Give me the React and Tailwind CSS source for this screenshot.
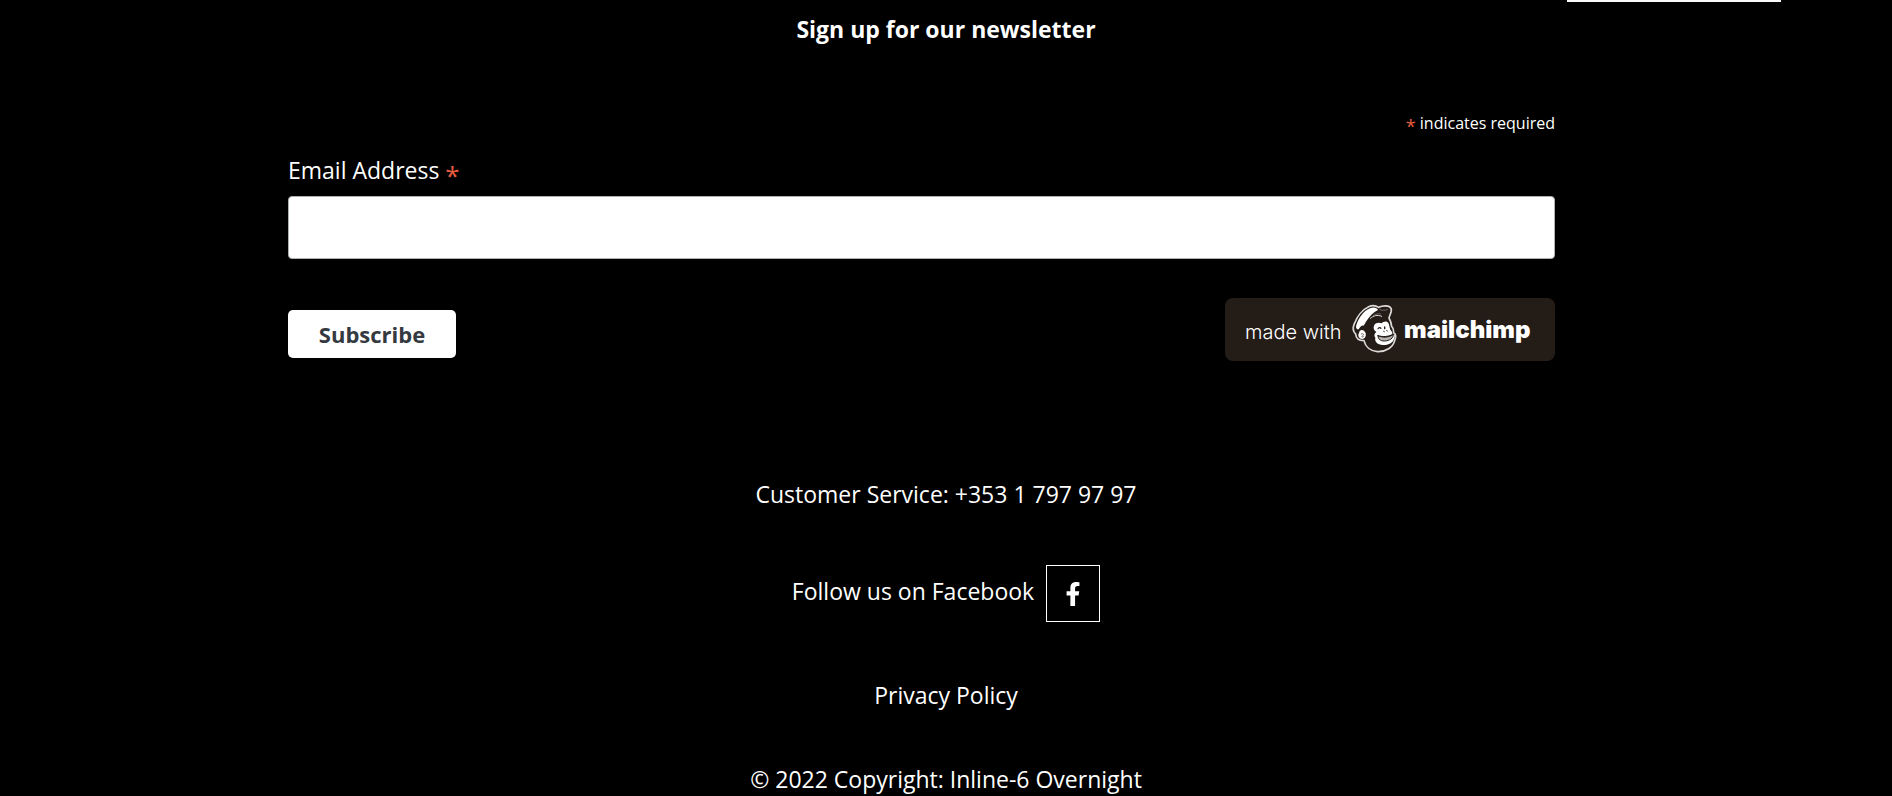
import { FaFacebookF } from "react-icons/fa";

function Freddie() {
  return (
    <svg viewBox="0 0 156 162" className="h-[54px] w-[52px] shrink-0" aria-hidden="true" fill="none" strokeLinecap="round" strokeLinejoin="round">
      {/* head outline */}
      <path
        d="M42 113C30 113 18 108 17 93C9 86 8 74 13 62C20 43 36 20 56 11C67 6 77 7 86 13C98 7 118 6 123 16C128 26 118 36 117 45C121 52 124 62 125 70C132 76 131 84 131 89C139 92 138 104 134 113C129 133 108 147 82 146C61 144 46 131 42 113Z"
        stroke="#dcdad8"
        strokeWidth="5"
      />
      {/* cap */}
      <path d="M60 16C70 11 82 14 84 21C66 29 51 50 41 68C36 66 31 70 26 79C20 80 16 76 19 66C25 47 40 24 60 16Z" fill="#fff" />
      <path d="M87 18C93 23 102 23 112 20" stroke="#8d8783" strokeWidth="2" />
      <path d="M61 46C70 38 82 34 95 40" stroke="#dcdad8" strokeWidth="3" />
      <path d="M70 38C78 32 86 31 92 33" stroke="#8d8783" strokeWidth="2" />
      {/* ear */}
      <path d="M29 84C35 78 45 82 47 91C49 101 44 108 37 108C27 108 22 98 27 90Z" fill="#fff" />
      <path d="M34 93C40 89 43 96 38 98C42 102 38 104 35 101" stroke="#5c544f" strokeWidth="2.5" />
      {/* face */}
      <path
        d="M72 68C74 60 86 57 95 61C100 54 112 53 115 60C119 67 118 74 121 80C125 84 127 88 127 93C134 91 136 97 133 106C129 121 113 128 98 126C83 125 73 116 76 104C71 99 73 91 79 87C72 83 69 75 72 68Z"
        fill="#fff"
      />
      <path d="M84 77C86 73 91 73 93 76" stroke="#241c17" strokeWidth="3.5" />
      <path d="M104 72V77" stroke="#241c17" strokeWidth="4" />
      <path d="M101 85L103 86M110 83L112 84" stroke="#241c17" strokeWidth="3" />
      <path d="M84 98C98 103 118 101 130 93C131 105 119 114 103 114C91 114 84 109 84 98Z" fill="#b5b1ae" stroke="#241c17" strokeWidth="3" />
      <path d="M86 99C100 104 117 102 129 95" stroke="#241c17" strokeWidth="3.5" />
    </svg>
  );
}

function SignupForm() {
  return (
    <form className="mt-16 w-full max-w-[1316px] pr-[49px]" onSubmit={(e) => e.preventDefault()}>
      <p className="text-right text-base leading-6">
        <span className="align-sub text-lg leading-none text-[#e85c41]">*</span> indicates required
      </p>
      <label htmlFor="email" className="mt-[17px] block leading-9">
        Email Address <span className="align-sub text-[26px] leading-none text-[#e85c41]">*</span>
      </label>
      <input
        id="email"
        type="email"
        required
        className="mt-2 block h-[63px] w-full rounded border border-[#abb0b2] bg-white px-4 text-black"
      />
      <div className="mt-[39px] flex items-start justify-between">
        <button type="submit" className="mt-3 h-12 w-[168px] rounded-[5px] bg-white text-[22px] font-bold text-[#343a40]">
          Subscribe
        </button>
        <a
          href="#mailchimp"
          className="flex h-[63px] w-[330px] items-center rounded-lg bg-[#241c17] pl-5 font-['Inter']"
        >
          <span className="w-[105px] pt-1 text-xl font-light">made with</span>
          <Freddie />
          <span className="pl-0.5 text-2xl font-black">mailchimp</span>
        </a>
      </div>
    </form>
  );
}

export default function App() {
  return (
    <div className="min-h-screen bg-black font-['Open_Sans','Noto_Sans',sans-serif] text-[23px] text-white">
      <div className="flex justify-end pr-[111px]">
        <div className="h-0.5 w-[214px] bg-[#f8f9fa]" />
      </div>
      <footer className="flex flex-col items-center px-4">
        <h2 className="mt-[9px] text-[23px] leading-9 font-bold">Sign up for our newsletter</h2>
        <SignupForm />
        <p className="mt-[115px] leading-9">Customer Service: +353 1 797 97 97</p>
        <div className="mt-[53px] flex items-start gap-3">
          <span className="pt-2 leading-9">Follow us on Facebook</span>
          <a
            href="#facebook"
            aria-label="Facebook"
            className="flex h-[57px] w-[54px] items-center justify-center border border-white"
          >
            <FaFacebookF className="size-6" />
          </a>
        </div>
        <a href="#privacy" className="mt-[55px] leading-9">
          Privacy Policy
        </a>
        <p className="mt-12 leading-9">© 2022 Copyright: Inline-6 Overnight</p>
      </footer>
    </div>
  );
}
